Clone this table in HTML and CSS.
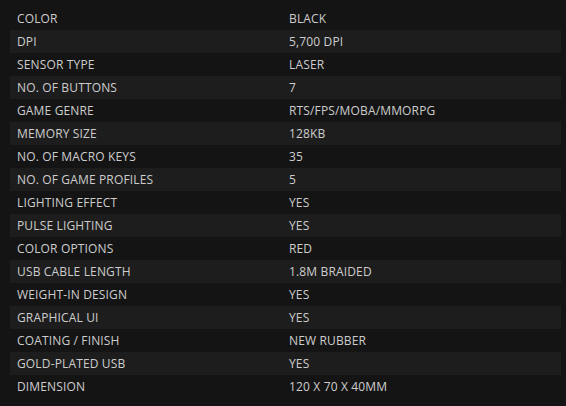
FILE: index.html
```html
<!DOCTYPE html>
<html>
<head>
<meta charset="utf-8">
<link rel="stylesheet" href="styles.css">
</head>
<body>
<table class="specs">
<tr><td>COLOR</td><td>BLACK</td></tr>
<tr><td>DPI</td><td>5,700 DPI</td></tr>
<tr><td>SENSOR TYPE</td><td>LASER</td></tr>
<tr><td>NO. OF BUTTONS</td><td>7</td></tr>
<tr><td>GAME GENRE</td><td>RTS/FPS/MOBA/MMORPG</td></tr>
<tr><td>MEMORY SIZE</td><td>128KB</td></tr>
<tr><td>NO. OF MACRO KEYS</td><td>35</td></tr>
<tr><td>NO. OF GAME PROFILES</td><td>5</td></tr>
<tr><td>LIGHTING EFFECT</td><td>YES</td></tr>
<tr><td>PULSE LIGHTING</td><td>YES</td></tr>
<tr><td>COLOR OPTIONS</td><td>RED</td></tr>
<tr><td>USB CABLE LENGTH</td><td>1.8M BRAIDED</td></tr>
<tr><td>WEIGHT-IN DESIGN</td><td>YES</td></tr>
<tr><td>GRAPHICAL UI</td><td>YES</td></tr>
<tr><td>COATING / FINISH</td><td>NEW RUBBER</td></tr>
<tr><td>GOLD-PLATED USB</td><td>YES</td></tr>
<tr><td>DIMENSION</td><td>120 X 70 X 40MM</td></tr>
</table>
</body>
</html>
```
FILE: styles.css
```css
html, body {
  margin: 0;
  background: #141414;
}
body {
  padding: 7px 5px 0 10px;
  font-family: "Open Sans", sans-serif;
  font-size: 12px;
  letter-spacing: 0.15px;
  color: #cdcdcd;
}
.specs {
  width: 551px;
  border-collapse: collapse;
}
.specs td {
  height: 23px;
  padding: 0 0 0 7px;
  vertical-align: middle;
  line-height: 23px;
  white-space: nowrap;
}
.specs td:first-child {
  width: 265px;
}
.specs tr:nth-child(even) td {
  background: #1d1d1d;
}
```
